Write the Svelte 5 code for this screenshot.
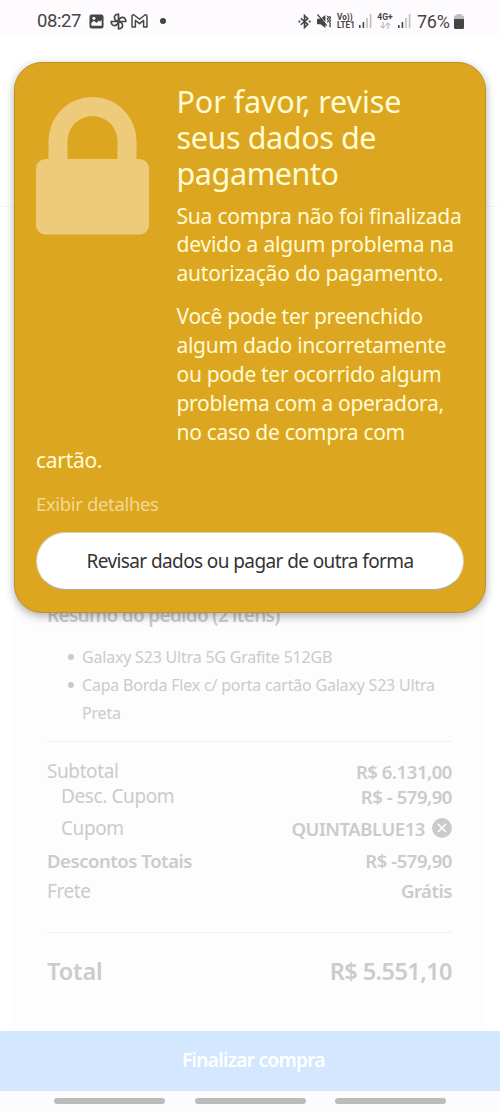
<script>
  const items = ['Galaxy S23 Ultra 5G Grafite 512GB', 'Capa Borda Flex c/ porta cartão Galaxy S23 Ultra Preta'];
  const bars = [3, 6, 10, 14];
</script>

<div class="screen">
  <header class="status">
    <span class="clock">08:27</span>
    <svg class="photo" width="15" height="15" viewBox="0 0 16 16">
      <rect x="0.5" y="0.5" width="15" height="15" rx="2.5" fill="#454545" />
      <path d="M2.500 12.500V9.500L5.200 7.200l2.700 2.300L10.700 7l.8 1.200 2-1.700v6z" fill="#fdfbfe" />
      <circle cx="5.200" cy="4.600" r="1.600" fill="#fdfbfe" />
    </svg>
    <svg class="fan" width="17" height="17" viewBox="0 0 18 18" fill="none" stroke="#454545" stroke-width="1.8" stroke-linejoin="round">
      <path d="M9 9V1.200C5.800 1.400 4.500 3 4.700 5 4.900 7 6.500 8.500 9 9z" />
      <path d="M9 9h7.800C16.600 5.800 15 4.500 13 4.700 11 4.900 9.500 6.500 9 9z" />
      <path d="M9 9v7.800c3.200-.2 4.500-1.800 4.300-3.800C13.100 11 11.500 9.500 9 9z" />
      <path d="M9 9H1.200c.2 3.200 1.800 4.500 3.800 4.300C7 13.100 8.500 11.500 9 9z" />
    </svg>
    <svg class="mail" width="17" height="14" viewBox="0 0 18 15" fill="none" stroke="#454545" stroke-width="1.6" stroke-linejoin="round">
      <path d="M1 13.800V2.400C1 1 2.400.5 3.500 1.300L9 5.600l5.500-4.300C15.600.5 17 1 17 2.400v11.400h-3.600V6.900L9 10.400 4.600 6.900v6.900z" />
    </svg>
    <i class="more"></i>
    <span class="spacer"></span>
    <svg class="bluetooth" width="13" height="15" viewBox="0 0 14 16" fill="none" stroke="#454545" stroke-width="1.7">
      <path d="M3 4.500l7.500 6.500L7 14.500v-13L10.500 5 3 11.500" />
      <path d="M0.500 8h2M11.500 8h2" stroke-width="2.200" />
    </svg>
    <svg class="mute" width="14" height="15" viewBox="0 0 15 16">
      <path d="M0 5h3.800L9 1v14l-5.200-4H0z" fill="#454545" />
      <path d="M1.500.5l11 12.500" stroke="#fdfbfe" stroke-width="1" />
      <path d="M0.500.5l10 12" stroke="#454545" stroke-width="1.400" />
      <path d="M11 2l1.500 1.700L11 5.400l1.500 1.800L11 9M13.500 2.200l1 1.600-1 1.600 1 1.900-1 1.700 1 1.800-1 1.700 1 1.500" fill="none" stroke="#454545" stroke-width="1.300" />
    </svg>
    <span class="volte"><b>Vo))</b><b>LTE1</b></span>
    <svg class="signal" width="13" height="14" viewBox="0 0 13 14">
      {#each bars as h, i}
        <rect x={i * 3.6} y={14 - h} width="1.6" height={h} fill={i < 2 ? '#454545' : '#bdbdbd'} />
      {/each}
    </svg>
    <span class="network">
      <b>4G+</b>
      <svg width="11" height="7" viewBox="0 0 11 7" fill="none" stroke="#aaa" stroke-width="1">
        <path d="M3 0v6M.5 3.700L3 6.200l2.500-2.500M8 7V1M5.500 3.300L8 .8l2.500 2.500" />
      </svg>
    </span>
    <svg class="signal second" width="13" height="14" viewBox="0 0 13 14">
      {#each bars as h, i}
        <rect x={i * 3.6} y={14 - h} width="1.6" height={h} fill={i < 2 ? '#454545' : '#bdbdbd'} />
      {/each}
    </svg>
    <span class="percent">76%</span>
    <svg class="battery" width="10" height="15" viewBox="0 0 10 15">
      <path d="M2.500 0h5v1.500H9a1 1 0 0 1 1 1V6H0V2.500a1 1 0 0 1 1-1h1.500z" fill="#bdbdbd" />
      <path d="M0 5h10v8.500A1.500 1.500 0 0 1 8.500 15h-7A1.500 1.500 0 0 1 0 13.500z" fill="#454545" />
    </svg>
  </header>

  <main>
    <div class="top"></div>
    <section class="summary">
      <h2>Resumo do pedido (2 itens)</h2>
      <ul>
        {#each items as item}
          <li><i></i><span>{item}</span></li>
        {/each}
      </ul>
      <div class="totals">
        <div class="row"><span>Subtotal</span><b>R$ 6.131,00</b></div>
        <div class="row indent desc"><span>Desc. Cupom</span><b>R$ - 579,90</b></div>
        <div class="row indent cupom">
          <span>Cupom</span>
          <b class="code">QUINTABLUE13</b>
          <svg width="20" height="20" viewBox="0 0 20 20">
            <circle cx="10" cy="10" r="10" fill="#cbcbcb" />
            <path d="M6 6l8 8M14 6l-8 8" stroke="#fff" stroke-width="1.600" />
          </svg>
        </div>
        <div class="row"><b class="label">Descontos Totais</b><b>R$ -579,90</b></div>
        <div class="row frete"><span>Frete</span><b>Grátis</b></div>
      </div>
      <div class="row total"><b class="name">Total</b><b>R$ 5.551,10</b></div>
    </section>
  </main>

  <button class="finish">Finalizar compra</button>

  <nav>
    <i></i><i></i><i></i>
  </nav>

  <div class="modal">
    <div class="lock">
      <svg width="113" height="138" viewBox="0 0 113 138" fill="#edcb7b">
        <path d="M12.500 64V44a44 44 0 0 1 88 0v20h-19V44a25 25 0 0 0-50 0v20z" />
        <rect y="62" width="113" height="75.500" rx="9.500" />
      </svg>
    </div>
    <h1>Por favor, revise<br /><span class="tight">seus dados de<br />pagamento</span></h1>
    <p>Sua compra não foi finalizada<br />devido a algum problema na<br />autorização do pagamento.</p>
    <p class="reason">Você pode ter preenchido<br />algum dado incorretamente<br />ou pode ter ocorrido algum<br />problema com a operadora,<br />no caso de compra com<br />cartão.</p>
    <a href="#detalhes">Exibir detalhes</a>
    <button class="review">Revisar dados ou pagar de outra forma</button>
  </div>
</div>

<style>
  :global(body) {
    margin: 0;
    background: #fff;
  }

  .screen {
    position: relative;
    display: flex;
    flex-direction: column;
    width: 500px;
    height: 1111px;
    overflow: hidden;
    font-family: "Noto Sans", "Open Sans", sans-serif;
    color: #cbcbcb;
    white-space: nowrap;
  }

  .screen * {
    box-sizing: border-box;
  }

  .status {
    display: flex;
    align-items: center;
    height: 35px;
    padding: 7px 36px 0 37px;
    background: #fdfbfe;
    color: #454545;
    font-family: Roboto, sans-serif;
    flex: none;
  }

  .clock {
    width: 44px;
    font-size: 18.500px;
    margin-right: 8px;
    letter-spacing: -0.4px;
  }

  .fan {
    margin-left: 6px;
  }

  .mail {
    margin-left: 4px;
  }

  .more {
    width: 6px;
    height: 6px;
    margin-left: 12px;
    border-radius: 50%;
    background: #454545;
  }

  .spacer {
    flex: 1;
  }

  .mute {
    margin-left: 6px;
  }

  .volte {
    display: flex;
    flex-direction: column;
    width: 18px;
    margin-left: 6px;
    font-size: 8.200px;
    line-height: 8px;
  }

  .signal {
    margin-left: 4px;
  }

  .network {
    display: flex;
    flex-direction: column;
    align-items: center;
    width: 16px;
    margin-left: 5px;
    font-size: 8.500px;
    line-height: 9px;
  }

  .signal.second {
    margin-left: 5px;
  }

  .percent {
    width: 33px;
    margin: 0 4px 0 6px;
    font-size: 18px;
    letter-spacing: -0.3px;
  }

  main {
    flex: 1;
    display: flex;
    flex-direction: column;
  }

  .top {
    height: 172px;
    border-bottom: 1px solid #f7f7f7;
  }

  .summary {
    flex: 1;
    margin: 0 14px;
    padding: 394px 34px 0 33px;
    background: #fdfdfd;
  }

  h2 {
    margin: 0;
    font-size: 19px;
    line-height: 28px;
    font-weight: 600;
    letter-spacing: -0.7px;
  }

  ul {
    margin: 14px 0 0;
    padding: 0 0 14px 21px;
    border-bottom: 1px solid #f1f1f1;
    font-size: 16px;
    line-height: 28px;
    letter-spacing: -0.2px;
    white-space: normal;
    list-style: none;
  }

  li {
    display: flex;
    gap: 8px;
  }

  li i {
    flex: none;
    width: 6px;
    height: 6px;
    margin-top: 11px;
    border-radius: 50%;
    background: #cbcbcb;
  }

  .totals {
    height: 191px;
    padding-top: 16px;
    border-bottom: 1px solid #f1f1f1;
  }

  .row {
    display: flex;
    align-items: center;
    justify-content: space-between;
    height: 26px;
    font-size: 19px;
    letter-spacing: -0.4px;
  }

  .row b {
    font-size: 18.500px;
    font-weight: 600;
    letter-spacing: -0.45px;
  }

  .row b.label {
    letter-spacing: -0.45px;
  }

  .indent {
    padding-left: 14px;
  }

  .desc {
    height: 25px;
    padding-bottom: 1px;
  }

  .cupom {
    height: 38px;
  }

  .code {
    margin-left: auto;
    margin-right: 7px;
  }

  .frete {
    height: 35px;
  }

  .total {
    height: 76px;
  }

  .total b {
    font-size: 23.500px;
    letter-spacing: -0.55px;
  }

  .total b.name {
    letter-spacing: -0.1px;
  }

  .finish {
    height: 60px;
    border: 0;
    border-bottom: 1px solid #dde3ee;
    padding: 0 0 2px 7px;
    background: #d3e7ff;
    color: #fff;
    font: 600 19px "Noto Sans", sans-serif;
    letter-spacing: -0.65px;
    flex: none;
  }

  nav {
    display: flex;
    justify-content: space-between;
    height: 20px;
    padding: 7px 54px 0;
    background: #fdfbfe;
    flex: none;
  }

  nav i {
    width: 111px;
    height: 6px;
    border-radius: 3px;
    background: #bbb;
  }

  /* sits over the faded checkout page */
  .modal {
    position: absolute;
    left: 14px;
    top: 62px;
    width: 472px;
    height: 551px;
    padding: 20px 21px;
    border: 1px solid #bf9028;
    border-radius: 28px;
    background: #dda620;
    box-shadow: 0 3px 10px rgba(0, 0, 0, 0.32);
    color: #fffbd2;
  }

  .lock {
    float: left;
    width: 140.500px;
    height: 360px;
    padding-top: 14px;
  }

  h1 {
    margin: 0 0 10.500px;
    font-size: 30.500px;
    line-height: 36px;
    font-weight: 400;
    letter-spacing: -0.1px;
  }

  .tight {
    letter-spacing: -0.4px;
  }

  p {
    margin: 0 0 14.500px;
    font-size: 21px;
    line-height: 28.800px;
    letter-spacing: -0.2px;
  }

  .reason {
    letter-spacing: -0.3px;
  }

  a {
    display: block;
    height: 29px;
    color: #f2d991;
    font-size: 18.500px;
    line-height: 28px;
    letter-spacing: -0.35px;
    text-decoration: none;
  }

  .review {
    width: 428px;
    height: 58px;
    margin-top: 13px;
    border: 1px solid #ddd0ac;
    border-bottom-color: #aaa;
    border-radius: 29px;
    background: #fff;
    color: #333;
    font: 400 19px "Noto Sans", sans-serif;
    letter-spacing: -0.6px;
  }
</style>
